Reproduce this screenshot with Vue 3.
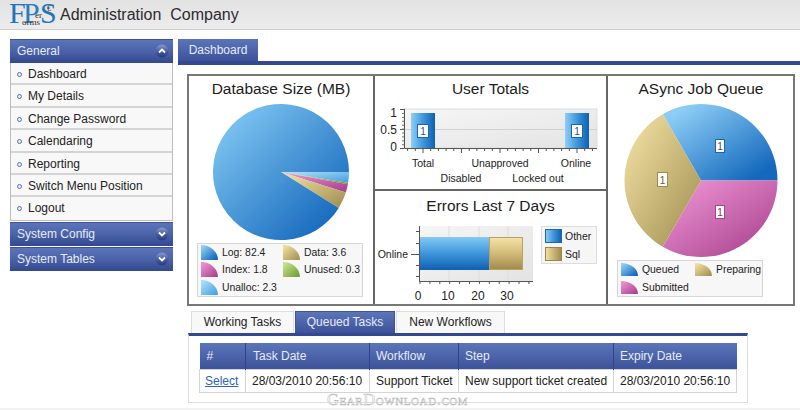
<script setup>
const menu = ['Dashboard','My Details','Change Password','Calendaring','Reporting','Switch Menu Position','Logout']

function arc(cx, cy, r, a0, a1) {
  const p = (a) => [cx + r * Math.cos(a * Math.PI / 180), cy + r * Math.sin(a * Math.PI / 180)]
  const [x0, y0] = p(a0), [x1, y1] = p(a1)
  return `M${cx} ${cy}L${x0.toFixed(2)} ${y0.toFixed(2)}A${r} ${r} 0 ${a1 - a0 > 180 ? 1 : 0} 1 ${x1.toFixed(2)} ${y1.toFixed(2)}Z`
}
const dbVals = [['unalloc',2.3],['green',0.3],['pink',1.8],['tan',3.6],['log',82.4]]
const total = dbVals.reduce((s, v) => s + v[1], 0)
let ang = 0
const dbSlices = dbVals.map(([c, v]) => {
  const a0 = ang; ang += v / total * 360
  return { c, d: arc(92, 74, 68, a0, ang) }
})
const jobSlices = [
  { c: 'blue', d: arc(93, 82.5, 76.5, -120, 0) },
  { c: 'pink', d: arc(93, 82.5, 76.5, 0, 120) },
  { c: 'tan', d: arc(93, 82.5, 76.5, 120, 240) },
]
const dbLegend = [['blue','Log: 82.4'],['tan','Data: 3.6'],['pink','Index: 1.8'],['green','Unused: 0.3'],['unalloc','Unalloc: 2.3']]
const jobLegend = [['blue','Queued'],['tan','Preparing'],['pink','Submitted']]
const colors = {
  blue: ['#8ccdf5','#1469bd'], log: ['#7cc3f0','#1669bd'], tan: ['#ecdb9c','#a8975a'], pink: ['#ea8fd0','#ac4792'],
  green: ['#c4e08a','#76a33c'], unalloc: ['#a6dcf9','#4fa5e2']
}
const userTicks = Array.from({ length: 25 }, (_, i) => ({ x: 33.6 + i * 7.7, major: i % 5 === 2 }))
const userY = Array.from({ length: 9 }, (_, i) => 9.5 + i * 3.9)
const errTicks = Array.from({ length: 12 }, (_, i) => 46 + i * 9.9)
const tabs = [['Working Tasks',false],['Queued Tasks',true],['New Workflows',false]]
const heads = ['#','Task Date','Workflow','Step','Expiry Date']
</script>

<template>
  <div class="page">
    <header class="topbar">
      <div class="logo">
        <span class="l-f">F</span><span class="l-p">P</span><span class="l-s">S</span>
        <span class="l-er">er</span><span class="l-orms">orms</span><span class="l-e">€</span>
      </div>
      <h1>Administration&nbsp; Company</h1>
    </header>

    <div class="main">
      <aside class="side">
        <div class="bar">General
          <svg class="knob" width="14" height="14" viewBox="0 0 14 14"><circle cx="7" cy="7" r="6.5" fill="url(#knob)"/><path d="M4 8.5 7 5.5l3 3" fill="none" stroke="#fff" stroke-width="1.8"/></svg>
        </div>
        <ul class="menu">
          <li v-for="m in menu" :key="m"><i class="dot"></i>{{ m }}</li>
        </ul>
        <div class="bar gap">System Config
          <svg class="knob" width="14" height="14" viewBox="0 0 14 14"><circle cx="7" cy="7" r="6.5" fill="url(#knob)"/><path d="M4 5.5 7 8.5l3-3" fill="none" stroke="#fff" stroke-width="1.8"/></svg>
        </div>
        <div class="bar gap">System Tables
          <svg class="knob" width="14" height="14" viewBox="0 0 14 14"><circle cx="7" cy="7" r="6.5" fill="url(#knob)"/><path d="M4 5.5 7 8.5l3-3" fill="none" stroke="#fff" stroke-width="1.8"/></svg>
        </div>
        <svg width="0" height="0" class="defs">
          <defs>
            <linearGradient id="knob" x1="0" y1="0" x2="0" y2="1"><stop offset="0" stop-color="#8a9ccb"/><stop offset="0.5" stop-color="#4a5f9f"/><stop offset="1" stop-color="#243a7e"/></linearGradient>
            <linearGradient v-for="(v, k) in colors" :key="k" :id="'g-' + k" x1="0" y1="0" x2="1" y2="1"><stop offset="0.12" :stop-color="v[0]"/><stop offset="0.88" :stop-color="v[1]"/></linearGradient>
            <linearGradient id="h-blue" x1="0" y1="0" x2="1" y2="0"><stop offset="0" stop-color="#8fd0f6"/><stop offset="0.5" stop-color="#3f96dc"/><stop offset="1" stop-color="#0f60b2"/></linearGradient>
            <linearGradient id="v-blue" x1="0" y1="0" x2="0" y2="1"><stop offset="0" stop-color="#83caf4"/><stop offset="0.5" stop-color="#3d95da"/><stop offset="1" stop-color="#0f60b2"/></linearGradient>
            <linearGradient id="v-tan" x1="0" y1="0" x2="0" y2="1"><stop offset="0" stop-color="#f5e3a6"/><stop offset="0.5" stop-color="#d2bb78"/><stop offset="1" stop-color="#a08a4c"/></linearGradient>
            <linearGradient id="hs-tan" x1="0" y1="0" x2="1" y2="0"><stop offset="0" stop-color="#f2e2a2"/><stop offset="1" stop-color="#a08a4c"/></linearGradient>
            <linearGradient id="plot" x1="0" y1="0" x2="1" y2="1"><stop offset="0" stop-color="#f6f6f6"/><stop offset="1" stop-color="#e3e3e3"/></linearGradient>
          </defs>
        </svg>
      </aside>

      <section class="content">
        <div class="tabhead"><span class="tab-main">Dashboard</span></div>
        <div class="charts">
          <div class="cell c1">
            <h2>Database Size (MB)</h2>
            <svg class="chart" width="184" height="145" viewBox="0 0 184 145">
              <path v-for="s in dbSlices" :key="s.c" :d="s.d" :fill="'url(#g-' + s.c + ')'"/>
            </svg>
            <div class="legend l1">
              <div v-for="l in dbLegend" :key="l[1]" class="li">
                <svg width="17" height="15" viewBox="0 0 17 15"><path d="M0 15V0A17 15 0 0 1 17 15Z" :fill="'url(#g-' + l[0] + ')'"/></svg>{{ l[1] }}
              </div>
            </div>
          </div>

          <div class="cell c2">
            <div class="sub s1">
              <h2>User Totals</h2>
              <svg class="chart" width="231" height="90" viewBox="0 0 231 90">
                <g transform="translate(-1 6)">
                  <rect x="30" y="5" width="193" height="39" fill="url(#plot)" stroke="#ddd"/>
                  <line x1="30" x2="223" y1="25.5" y2="25.5" stroke="#d2d2d2"/>
                  <rect x="37" y="9" width="24" height="35" fill="url(#h-blue)"/>
                  <rect x="191" y="9" width="24" height="35" fill="url(#h-blue)"/>
                  <g v-for="x in [49,203]" :key="x">
                    <rect :x="x-5.5" y="20.5" width="11" height="13" fill="#fff" stroke="#1e66b4"/>
                    <text :x="x" y="31" class="lab blue">1</text>
                  </g>
                  <path d="M30.5 5V44.5H223M26 5.5h4M26 25.5h4M26 44.5h4" fill="none" stroke="#555"/>
                  <path v-for="y in userY" :key="y" :d="`M28 ${y}h2`" stroke="#777"/>
                  <path v-for="t in userTicks" :key="t.x" :d="`M${t.x} 44v${t.major ? 5 : 3}`" stroke="#555"/>
                  <text x="23" y="13" class="ax num end">1</text>
                  <text x="23" y="30" class="ax num end">0.5</text>
                  <text x="23" y="47" class="ax num end">0</text>
                  <text x="49" y="63" class="ax mid">Total</text>
                  <text x="126" y="63" class="ax mid">Unapproved</text>
                  <text x="202" y="63" class="ax mid">Online</text>
                  <text x="87" y="78" class="ax mid">Disabled</text>
                  <text x="164" y="78" class="ax mid">Locked out</text>
                </g>
              </svg>
            </div>
            <div class="sub s2">
              <h2>Errors Last 7 Days</h2>
              <svg class="chart" width="231" height="90" viewBox="0 0 231 90">
                <g transform="translate(-1 1)">
                  <rect x="45" y="10" width="114" height="55" fill="url(#plot)"/>
                  <path d="M75 10v55M105 10v55M134 10v55" stroke="#dedede"/>
                  <rect x="45" y="21" width="70" height="33" fill="url(#v-blue)"/>
                  <rect x="115.5" y="21.5" width="33" height="32" fill="url(#v-tan)" stroke="#b8a25f"/>
                  <path d="M45.5 10V65.5H159M42 15.5h3M42 27.5h3M42 49.5h3M42 60.5h3" fill="none" stroke="#555"/>
                  <path d="M37 38.5h8" stroke="#555"/>
                  <path v-for="x in errTicks" :key="x" :d="`M${x} 65v3`" stroke="#555"/>
                  <text x="34" y="42" class="ax end">Online</text>
                  <text x="44" y="84" class="ax num mid">0</text>
                  <text x="74" y="84" class="ax num mid">10</text>
                  <text x="104" y="84" class="ax num mid">20</text>
                  <text x="133" y="84" class="ax num mid">30</text>
                  <rect x="167.5" y="10.5" width="55" height="37" fill="#f6f6f6" stroke="#ddd"/>
                  <rect x="171.5" y="13.5" width="16" height="13" fill="url(#h-blue)" stroke="#1a69b8"/>
                  <rect x="171.5" y="31.5" width="16" height="13" fill="url(#hs-tan)" stroke="#9a854a"/>
                  <text x="191" y="24" class="ax">Other</text>
                  <text x="191" y="42" class="ax">Sql</text>
                </g>
              </svg>
            </div>
          </div>

          <div class="cell c3">
            <h2>ASync Job Queue</h2>
            <svg class="chart" width="186" height="162" viewBox="0 0 186 162">
              <path v-for="s in jobSlices" :key="s.c" :d="s.d" :fill="'url(#g-' + s.c + ')'"/>
              <rect x="107.5" y="41.5" width="9" height="13" fill="#fff" stroke="#1e66b4"/>
              <text x="112" y="52" class="lab blue">1</text>
              <rect x="49.5" y="74.5" width="10" height="14" fill="#fff" stroke="#a08a4c"/>
              <text x="54.5" y="85.5" class="lab tanx">1</text>
              <rect x="107.5" y="107.5" width="9" height="13" fill="#fff" stroke="#a8448f"/>
              <text x="112" y="118" class="lab pinkx">1</text>
            </svg>
            <div class="legend l3">
              <div v-for="l in jobLegend" :key="l[1]" class="li">
                <svg width="17" height="13" viewBox="0 0 17 13"><path d="M0 13V0A17 13 0 0 1 17 13Z" :fill="'url(#g-' + l[0] + ')'"/></svg>{{ l[1] }}
              </div>
            </div>
          </div>
        </div>

        <div class="tasks">
          <div class="tabs">
            <span v-for="t in tabs" :key="t[0]" class="tab" :class="{ on: t[1] }">{{ t[0] }}</span>
          </div>
          <div class="box">
            <table>
              <thead><tr><th v-for="h in heads" :key="h">{{ h }}</th></tr></thead>
              <tbody><tr>
                <td><a href="#" @click.prevent>Select</a></td>
                <td>28/03/2010 20:56:10</td>
                <td>Support Ticket</td>
                <td>New support ticket created</td>
                <td>28/03/2010 20:56:10</td>
              </tr></tbody>
            </table>
          </div>
          <div class="mark">GearDownload.com</div>
        </div>
      </section>
    </div>
    <div class="foot"></div>
  </div>
</template>

<style>
html, body { margin: 0; background: #fff; }
</style>

<style scoped>
.page { width: 800px; height: 410px; overflow: hidden; display: flex; flex-direction: column; background: #fff; font: 12px "Liberation Sans", Tahoma, sans-serif; color: #222; }
.topbar { height: 30px; box-sizing: border-box; flex: none; display: flex; align-items: center; background: linear-gradient(#e2e2e2, #ececec); border-bottom: 1px solid #d0d0d0; }
.logo { position: relative; width: 50px; height: 29px; margin-left: 10px; font-family: "Liberation Serif", serif; color: #1f74bd; flex: none; }
.logo span { position: absolute; line-height: 1; }
.logo .l-f, .logo .l-p, .logo .l-s { top: 1px; font-size: 30px; line-height: 24px; }
.logo .l-f { left: -1px; }
.logo .l-p { left: 13px; color: #2a7cc4; }
.logo .l-s { left: 30px; }
.l-er { left: 25px; top: 11px; font-size: 9px; color: #333; }
.l-orms { left: 12px; top: 18px; font-size: 9px; color: #333; }
.l-e { left: 37px; top: 5px; font-size: 8px; color: #333; }
h1 { margin: 0; font: 400 16px "Liberation Sans", Tahoma, sans-serif; color: #2c2c2c; }
.main { flex: 1; display: flex; padding-top: 9px; min-height: 0; }
.foot { flex: none; height: 2px; background: #f2f2f2; }
.side { width: 163px; margin-left: 10px; flex: none; }
.defs { position: absolute; }
.bar { height: 24px; line-height: 23px; padding-left: 7px; position: relative; color: #e6ebf7; background: linear-gradient(#5c75ba, #4a62a8 50%, #33488f); border-top: 1px solid #3c5199; box-sizing: border-box; }
.bar.gap { margin-top: 1px; }
.knob { position: absolute; right: 4px; top: 4px; }
.menu { list-style: none; margin: 0; padding: 0; border-left: 1px solid #bdbdbd; border-right: 1px solid #bdbdbd; border-bottom: 1px solid #bdbdbd; }
.menu li { height: 22.4px; box-sizing: border-box; line-height: 23px; padding-left: 17px; position: relative; background: #f8f8f8; border-bottom: 2px solid #d4d4d4; color: #222; }
.menu li:last-child { border-bottom: 0; }
.dot { position: absolute; left: 6px; top: 9px; width: 3px; height: 3px; border: 1px solid #5a70b5; border-radius: 50%; background: #e8ecf6; }
.content { flex: 1; margin-left: 5px; min-width: 0; }
.tabhead { height: 22px; border-bottom: 4px solid #33488f; }
.tab-main { display: inline-block; width: 80px; height: 22px; line-height: 22px; text-align: center; color: #e6ebf7; background: linear-gradient(#5c75ba, #3c5299); }
.charts { display: flex; width: 608px; height: 232px; margin: 9px 0 0 9px; box-sizing: border-box; border: 2px solid #777; background: #fff; }
.cell { box-sizing: border-box; }
.c1 { width: 186px; border-right: 2px solid #666; }
.c2 { width: 233px; border-right: 2px solid #666; display: flex; flex-direction: column; }
.c3 { flex: 1; }
h2 { margin: 4px 0 0; font: 400 15.5px/18px "Liberation Sans", sans-serif; text-align: center; color: #1c1c1c; }
.chart { display: block; }
.s1 { height: 115px; box-sizing: border-box; border-bottom: 2px solid #666; }
.s2 { flex: 1; min-height: 0; }
.s2 h2 { margin-top: 6px; }
.ax { font: 10.5px "Liberation Sans", sans-serif; fill: #222; }
.num { font-size: 12px; }
.end { text-anchor: end; }
.mid { text-anchor: middle; }
.lab { font: 10px "Liberation Sans", sans-serif; text-anchor: middle; }
.blue { fill: #1e4f9c; }
.tanx { fill: #6b5a28; }
.pinkx { fill: #8a2f72; }
.legend { box-sizing: border-box; background: #f7f7f7; border: 1px solid #d6d6d6; font-size: 10.4px; color: #222; }
.li { display: flex; align-items: center; gap: 4px; white-space: nowrap; height: 17px; }
.l1 { width: 166px; height: 54px; margin-left: 8px; padding: 0 3px; display: grid; grid-template-columns: 82px 1fr; }
.l3 { width: 146px; height: 37px; margin-left: 9px; padding: 0 3px; display: grid; grid-template-columns: 74px 1fr; }
.tasks { margin-left: 10px; position: relative; }
.tabs { display: flex; gap: 1px; margin: 5px 0 0 3px; height: 22px; }
.tab { box-sizing: border-box; height: 22px; line-height: 21px; text-align: center; white-space: nowrap; background: #f8f8f8; border: 1px solid #ddd; border-bottom: 0; color: #222; }
.tab:nth-child(1) { width: 103px; }
.tab:nth-child(2) { width: 100px; }
.tab:nth-child(3) { width: 109px; }
.tab.on { color: #e6ebf7; background: linear-gradient(#5c75ba, #3c5299); border-color: #3c5299; }
.box { width: 560px; height: 70px; box-sizing: border-box; padding: 7px 10px; border-top: 3px solid #33488f; border-left: 1px solid #e0e0e0; border-right: 1px solid #ddd; border-bottom: 1px solid #ddd; }
table { border-collapse: collapse; table-layout: fixed; width: 538px; }
th { height: 26px; padding: 0 0 0 6px; box-sizing: border-box; text-align: left; font-weight: 400; color: #e6ebf7; background: linear-gradient(#5c75ba, #3c5299); border-right: 1px solid #2f4488; }
th:last-child { border-right: 0; }
th:nth-child(1) { width: 46px; padding-left: 7px; }
th:nth-child(2) { width: 124px; padding-left: 7px; }
th:nth-child(3) { width: 89px; }
th:nth-child(4) { width: 155px; }
td { height: 22px; padding: 0 0 0 6px; border: 1px solid #d4d4d4; white-space: nowrap; color: #222; }
td:first-child { padding-left: 5px; }
a { color: #2c62c0; }
.mark { position: absolute; left: 139px; top: 79px; font: 400 16.4px "Liberation Serif", serif; font-variant: small-caps; letter-spacing: .6px; color: #fff; -webkit-text-stroke: .5px #b5b5b5; white-space: nowrap; }
</style>
